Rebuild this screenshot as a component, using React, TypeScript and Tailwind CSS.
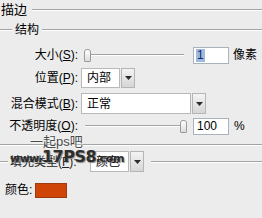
const font = "font-['Liberation_Sans','Noto_Sans_CJK_SC',sans-serif]";

function Etch({ className = '' }: { className?: string }) {
  return <div className={`h-[2px] border-t border-[#a3a3a3] border-b border-b-white ${className}`} />;
}

function Label({ text, hot, width = 'w-[78px]' }: { text: string; hot: string; width?: string }) {
  return (
    <div className={`${width} shrink-0 text-right text-[12px] leading-[14px] text-black`}>
      {text}(<span className="underline underline-offset-1">{hot}</span>):
    </div>
  );
}

function Arrow() {
  return (
    <div className="w-[14px] h-full border border-[#b5b5b5] bg-gradient-to-b from-[#f4f4f4] to-[#d6d6d6] flex items-center justify-center">
      <svg width="7" height="4" viewBox="0 0 7 4">
        <path d="M0 0h7L3.5 4z" fill="#2b2b2b" />
      </svg>
    </div>
  );
}

function Select({ value, width }: { value: string; width: string }) {
  return (
    <div className={`${width} h-full flex gap-[1px]`}>
      <div className="flex-1 bg-white border border-[#b9b9b9] pl-[5px] flex items-center text-[12px] leading-[14px]">
        {value}
      </div>
      <Arrow />
    </div>
  );
}

function Slider({ width, pos }: { width: string; pos: 'start' | 'end' }) {
  return (
    <div className={`${width} h-full relative flex items-center`}>
      <div className="w-full">
        <Etch />
      </div>
      <div
        className={`absolute top-[3px] ${pos === 'start' ? 'left-0' : 'right-0'} w-[7px] h-[13px] rounded-t-[3px] rounded-b-[1px] border border-[#9a9a9a] bg-gradient-to-b from-white to-[#dcdcdc]`}
      />
    </div>
  );
}

export default function App() {
  return (
    <div className={`w-[262px] h-[218px] bg-[#ececec] overflow-hidden relative ${font} text-black`}>
      {/* 描边 */}
      <div className="h-[20px] flex items-center">
        <span className="pl-[1px] text-[13px] leading-[14px]">描边</span>
        <Etch className="flex-1 ml-[5px]" />
      </div>

      {/* 结构 */}
      <div className="h-[20px] flex items-center">
        <Etch className="w-[12px]" />
        <span className="px-[3px] text-[12px] leading-[14px]">结构</span>
        <Etch className="flex-1" />
      </div>

      {/* 大小 */}
      <div className="mt-[6px] h-[18px] flex items-center">
        <Label text="大小" hot="S" />
        <div className="ml-[6px] h-full">
          <Slider width="w-[100px]" pos="start" />
        </div>
        <div className="ml-[9px] w-[36px] h-[17px] bg-white border border-[#a9b2bd] flex items-center pl-[2px]">
          <span className="bg-[#9fb9df] text-[#0c2a66] text-[12px] leading-[13px] px-[1px]">1</span>
        </div>
        <span className="ml-[4px] text-[12px] leading-[14px]">像素</span>
      </div>

      {/* 位置 */}
      <div className="mt-[4px] h-[20px] flex items-center">
        <Label text="位置" hot="P" />
        <div className="ml-[3px] h-full">
          <Select value="内部" width="w-[54px]" />
        </div>
      </div>

      {/* 混合模式 */}
      <div className="mt-[5px] h-[21px] flex items-center">
        <Label text="混合模式" hot="B" />
        <div className="ml-[3px] h-full">
          <Select value="正常" width="w-[125px]" />
        </div>
      </div>

      {/* 不透明度 */}
      <div className="mt-[3px] h-[18px] flex items-center">
        <Label text="不透明度" hot="O" />
        <div className="ml-[7px] h-full">
          <Slider width="w-[102px]" pos="end" />
        </div>
        <div className="ml-[6px] w-[36px] h-[17px] bg-white border border-[#a9b2bd] flex items-center pl-[3px]">
          <span className="text-[12px] leading-[13px]">100</span>
        </div>
        <span className="ml-[5px] text-[12px] leading-[14px]">%</span>
      </div>

      <Etch className="mt-[9px]" />

      {/* 填充类型 */}
      <div className="mt-[5px] h-[21px] flex items-center">
        <Etch className="w-[8px]" />
        <div className="pl-[2px] w-[81px] shrink-0 text-[12px] leading-[14px] text-[#222]">
          填充类型(<span className="underline">F</span>):
        </div>
        <div className="ml-[1px] h-full">
          <Select value="颜色" width="w-[54px]" />
        </div>
        <Etch className="flex-1 ml-[7px]" />
      </div>

      {/* 颜色 */}
      <div className="mt-[10px] h-[16px] flex items-center">
        <span className="pl-[5px] text-[12px] leading-[14px]">颜色:</span>
        <div className="ml-[3px] w-[32px] h-[15px] bg-[#cf4508] border border-[#9c3a10]" />
      </div>

      {/* watermark */}
      <div className="absolute left-[30px] top-[135px] text-[13px] leading-[14px] text-[#4a4a4a] [text-shadow:0_0_2px_#fff,0_0_2px_#fff]">
        一起ps吧
      </div>
      <div className="absolute left-[10px] top-[149px] flex items-baseline font-bold text-[#2e2e2e] [text-shadow:1px_1px_1px_#8a8a8a] font-['DejaVu_Sans',sans-serif]">
        <span className="text-[11px] leading-[16px] tracking-[-0.5px]">www.</span>
        <span className="text-[16px] leading-[16px] tracking-[-0.5px]">17PS8</span>
        <span className="text-[11px] leading-[16px] tracking-[-0.5px]">.com</span>
      </div>
    </div>
  );
}
